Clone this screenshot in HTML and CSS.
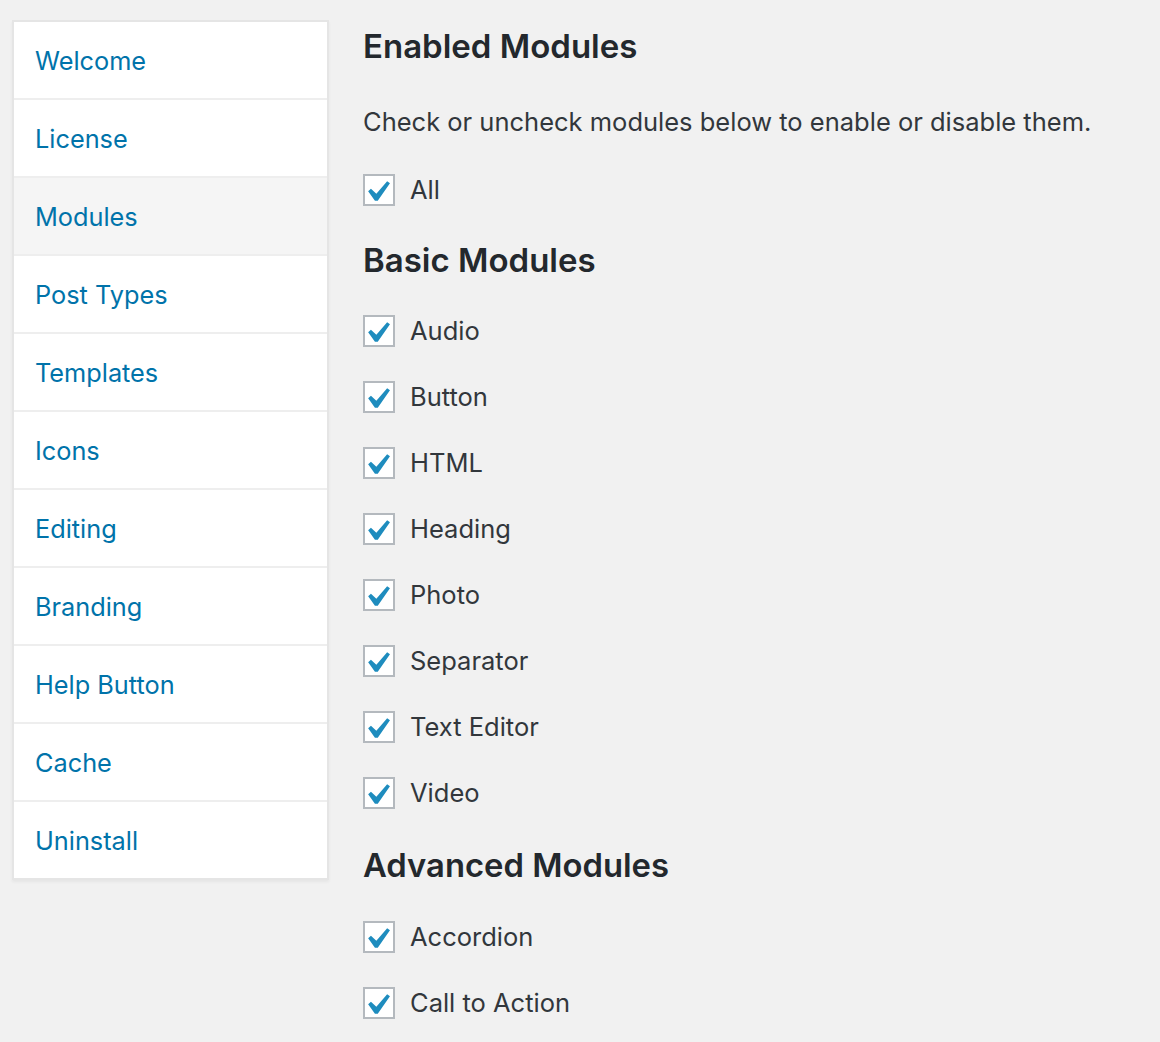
FILE: index.html
```html
<!DOCTYPE html>
<html lang="en">
<head>
<meta charset="utf-8">
<title>Modules</title>
<link rel="stylesheet" href="styles.css">
</head>
<body>
<div class="page">
  <nav class="nav">
    <ul class="nav-list">
      <li><a class="nav-link" href="#">Welcome</a></li>
      <li><a class="nav-link" href="#">License</a></li>
      <li><a class="nav-link active" href="#">Modules</a></li>
      <li><a class="nav-link" href="#">Post Types</a></li>
      <li><a class="nav-link" href="#">Templates</a></li>
      <li><a class="nav-link" href="#">Icons</a></li>
      <li><a class="nav-link" href="#">Editing</a></li>
      <li><a class="nav-link" href="#">Branding</a></li>
      <li><a class="nav-link" href="#">Help Button</a></li>
      <li><a class="nav-link" href="#">Cache</a></li>
      <li><a class="nav-link" href="#">Uninstall</a></li>
    </ul>
  </nav>
  <main class="content">
    <h2 class="title first">Enabled Modules</h2>
    <p class="intro">Check or uncheck modules below to enable or disable them.</p>
    <div class="rows">
      <label class="row"><span class="box"><svg class="tick" viewBox="0 0 20 20"><path d="M14.83 4.89l1.34.94-5.81 8.38H9.02L5.78 9.67l1.34-1.25 2.57 2.4z"/></svg></span><span class="label">All</span></label>
    </div>
    <h2 class="title">Basic Modules</h2>
    <div class="rows">
      <label class="row"><span class="box"><svg class="tick" viewBox="0 0 20 20"><path d="M14.83 4.89l1.34.94-5.81 8.38H9.02L5.78 9.67l1.34-1.25 2.57 2.4z"/></svg></span><span class="label">Audio</span></label>
      <label class="row"><span class="box"><svg class="tick" viewBox="0 0 20 20"><path d="M14.83 4.89l1.34.94-5.81 8.38H9.02L5.78 9.67l1.34-1.25 2.57 2.4z"/></svg></span><span class="label">Button</span></label>
      <label class="row"><span class="box"><svg class="tick" viewBox="0 0 20 20"><path d="M14.83 4.89l1.34.94-5.81 8.38H9.02L5.78 9.67l1.34-1.25 2.57 2.4z"/></svg></span><span class="label">HTML</span></label>
      <label class="row"><span class="box"><svg class="tick" viewBox="0 0 20 20"><path d="M14.83 4.89l1.34.94-5.81 8.38H9.02L5.78 9.67l1.34-1.25 2.57 2.4z"/></svg></span><span class="label">Heading</span></label>
      <label class="row"><span class="box"><svg class="tick" viewBox="0 0 20 20"><path d="M14.83 4.89l1.34.94-5.81 8.38H9.02L5.78 9.67l1.34-1.25 2.57 2.4z"/></svg></span><span class="label">Photo</span></label>
      <label class="row"><span class="box"><svg class="tick" viewBox="0 0 20 20"><path d="M14.83 4.89l1.34.94-5.81 8.38H9.02L5.78 9.67l1.34-1.25 2.57 2.4z"/></svg></span><span class="label">Separator</span></label>
      <label class="row"><span class="box"><svg class="tick" viewBox="0 0 20 20"><path d="M14.83 4.89l1.34.94-5.81 8.38H9.02L5.78 9.67l1.34-1.25 2.57 2.4z"/></svg></span><span class="label">Text Editor</span></label>
      <label class="row"><span class="box"><svg class="tick" viewBox="0 0 20 20"><path d="M14.83 4.89l1.34.94-5.81 8.38H9.02L5.78 9.67l1.34-1.25 2.57 2.4z"/></svg></span><span class="label">Video</span></label>
    </div>
    <h2 class="title advanced">Advanced Modules</h2>
    <div class="rows">
      <label class="row"><span class="box"><svg class="tick" viewBox="0 0 20 20"><path d="M14.83 4.89l1.34.94-5.81 8.38H9.02L5.78 9.67l1.34-1.25 2.57 2.4z"/></svg></span><span class="label">Accordion</span></label>
      <label class="row"><span class="box"><svg class="tick" viewBox="0 0 20 20"><path d="M14.83 4.89l1.34.94-5.81 8.38H9.02L5.78 9.67l1.34-1.25 2.57 2.4z"/></svg></span><span class="label">Call to Action</span></label>
    </div>
  </main>
</div>
</body>
</html>
```

FILE: styles.css
```css
html, body {
  margin: 0;
  padding: 0;
  background: #f1f1f1;
  height: 100%;
  overflow: hidden;
}

body {
  font-family: Inter, "Liberation Sans", sans-serif;
  color: #32373c;
}

.page {
  display: flex;
  align-items: flex-start;
  padding: 20px 0 0 12px;
}

.nav {
  width: 317px;
  flex: none;
}

.nav-list {
  list-style: none;
  margin: 0;
  padding: 0;
  background: #fff;
  border: 2px solid #e5e5e5;
  box-shadow: 0 2px 3px rgba(0, 0, 0, 0.05);
}

.nav-list li + li {
  border-top: 2px solid #eeeeee;
}

.nav-link {
  display: block;
  height: 75px;
  padding-top: 1px;
  line-height: 76px;
  padding-left: 21px;
  font-size: 25.3px;
  color: #0073aa;
  text-decoration: none;
}

.nav-link.active {
  background: #f5f5f5;
}

.content {
  margin-left: 34px;
  display: flex;
  flex-direction: column;
}

.title {
  margin: 34px 0 35px;
  font-size: 33px;
  line-height: 40px;
  font-weight: 600;
  color: #23282d;
}

.title.first {
  margin: 6px 0 38px;
}

.title.advanced {
  margin: 36px 0 36px;
  font-size: 32.8px;
}

.intro {
  margin: 0 0 34px;
  font-size: 25.5px;
  line-height: 36px;
  color: #32373c;
}

.rows {
  display: flex;
  flex-direction: column;
  gap: 34px;
}

.row {
  display: flex;
  align-items: center;
  gap: 15px;
  height: 32px;
}

.box {
  position: relative;
  width: 28px;
  height: 28px;
  border: 2px solid #b4b9be;
  background: #fff;
  flex: none;
}

.tick {
  position: absolute;
  left: -9px;
  top: -5px;
  width: 42px;
  height: 42px;
  fill: #1e8cbe;
}

.label {
  font-size: 25.5px;
  line-height: 32px;
  color: #32373c;
}
```
